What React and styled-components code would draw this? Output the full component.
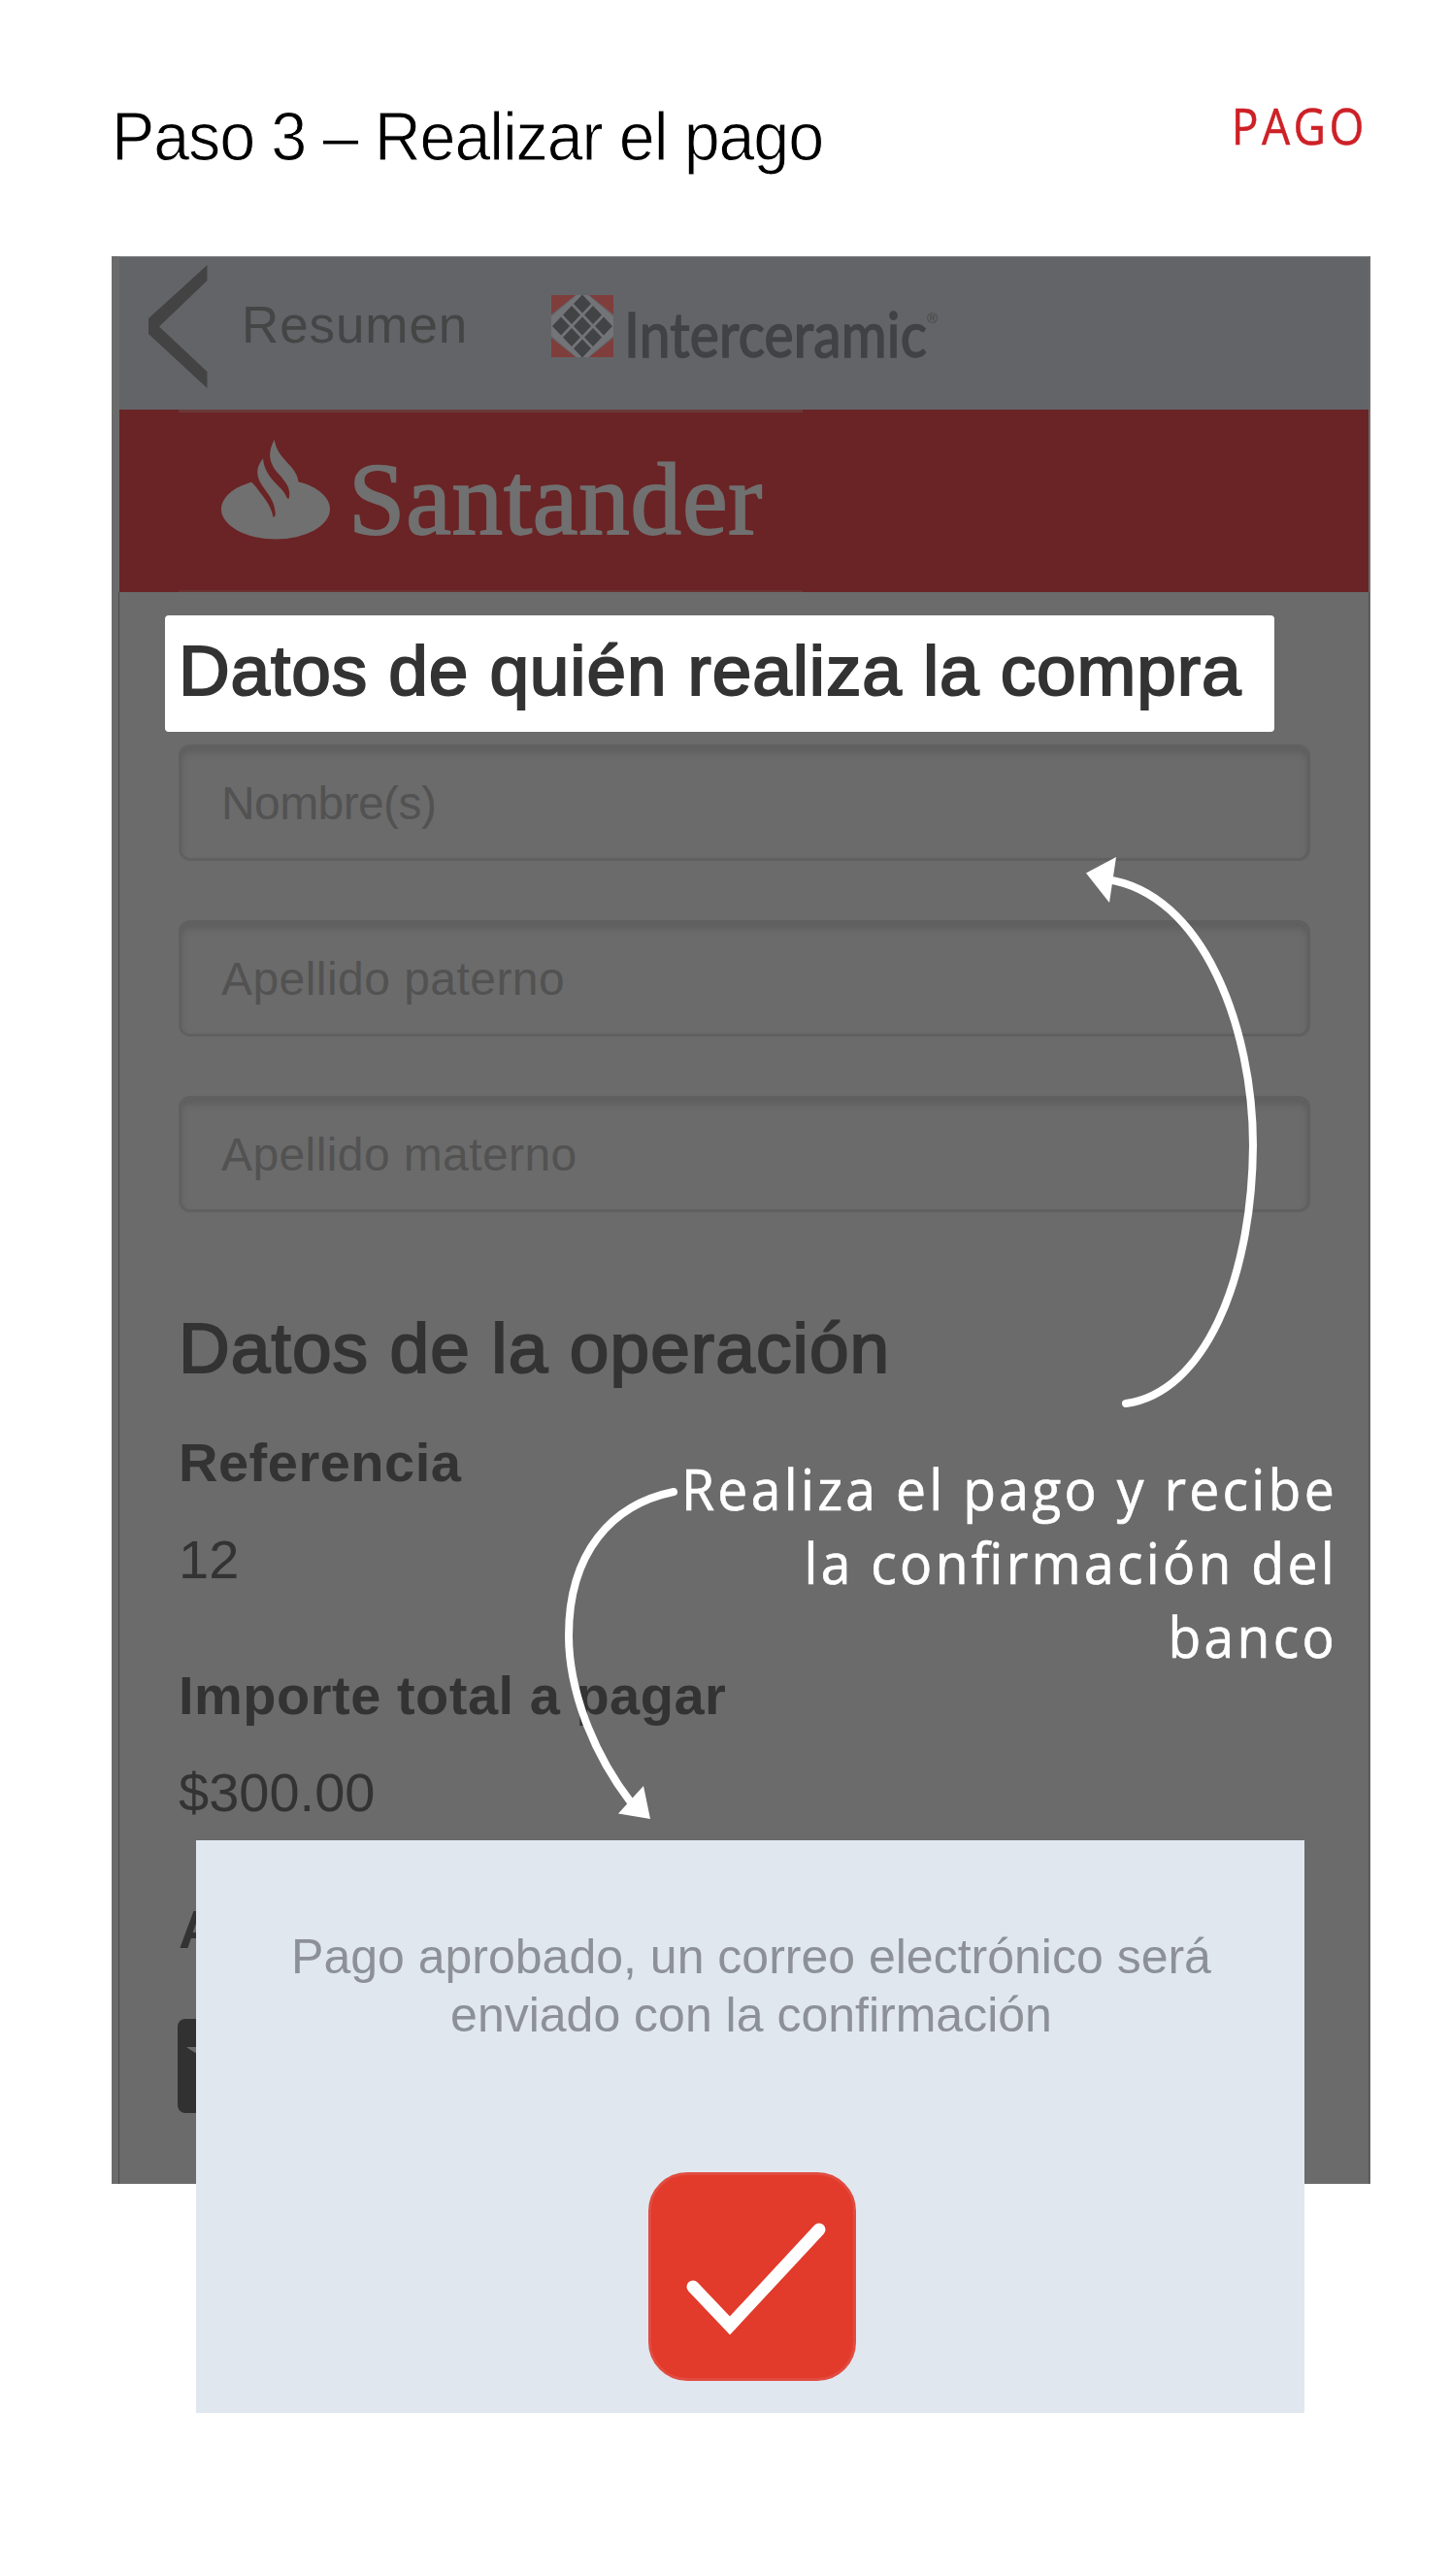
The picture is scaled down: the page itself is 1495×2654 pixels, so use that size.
import React from "react";
import styled, { createGlobalStyle } from "styled-components";

const GlobalStyle = createGlobalStyle`
  *, *::before, *::after { box-sizing: border-box; }
  body { margin: 0; background: #fff; }
`;

const sans = `"Liberation Sans", Arial, sans-serif`;
const humanist = `"Open Sans", "Noto Sans", sans-serif`;

const Page = styled.main`
  width: 1495px;
  height: 2654px;
  padding: 0 83px 0 115px;
  background: #fff;
  font-family: ${sans};
  overflow: hidden;
`;

const PageHeader = styled.header`
  display: flex;
  justify-content: space-between;
  align-items: flex-start;
  height: 264px;
  padding-top: 99px;
`;

const Title = styled.h1`
  margin: 2px 0 0;
  font-size: 70px;
  font-weight: 400;
  line-height: 80px;
  letter-spacing: -1.2px;
  white-space: nowrap;
  color: #000;
  -webkit-text-stroke: 1px #fff;
  transform: scaleX(0.95);
  transform-origin: left;
`;

const Section = styled.span`
  margin-right: 3px;
  font-family: ${humanist};
  font-size: 51px;
  line-height: 60px;
  letter-spacing: 3.8px;
  color: #cd2027;
  -webkit-text-stroke: 0.5px #cd2027;
  transform: scaleX(0.905);
  transform-origin: right;
`;

const Screen = styled.section`
  position: relative;
  width: 1297px;
  height: 1986px;
  padding: 0 2px 0 8px;
  background: #6b6b6b;
`;

const NavBar = styled.nav`
  display: flex;
  align-items: flex-start;
  height: 158px;
  padding-left: 30px;
  background: #636468;
  border-top: 1px solid #77787a;
  color: #454546;
`;

const BackIcon = styled.svg`
  width: 61px;
  height: 127px;
  margin-top: 8px;
`;

const BackLabel = styled.span`
  width: 319px;
  margin: 31px 0 0 35px;
  font-size: 53px;
  line-height: 78px;
  letter-spacing: 0.9px;
`;

const TileIcon = styled.svg`
  width: 64px;
  height: 64px;
  margin-top: 38.5px;
`;

const BrandName = styled.span`
  flex: none;
  width: 309px;
  margin: 39px 0 0 11px;
  font-family: Lato, sans-serif;
  font-size: 64px;
  font-weight: 400;
  line-height: 80px;
  letter-spacing: 0.2px;
  white-space: nowrap;
  color: #414244;
  -webkit-text-stroke: 1.6px #414244;
  transform: scaleX(0.89);
  transform-origin: left;
`;

const Registered = styled.span`
  margin: 53px 0 0 3px;
  font-family: ${sans};
  font-size: 15px;
  line-height: 20px;
`;

const BankBar = styled.div`
  display: flex;
  height: 188px;
  padding-left: 61px;
  background: #6a2425;
`;

const BankBanner = styled.div`
  display: flex;
  align-items: flex-start;
  width: 643px;
  padding: 28px 0 0 44px;
  border-top: 3px solid #6b3838;
  border-bottom: 2px solid #6b3232;
`;

const FlameIcon = styled.svg`
  width: 112px;
  height: 103px;
`;

const BankName = styled.span`
  margin: 2px 0 0 19px;
  font-family: "Liberation Serif", "Times New Roman", serif;
  font-size: 105px;
  line-height: 120px;
  letter-spacing: 0.8px;
  color: #717070;
  -webkit-text-stroke: 1.8px #717070;
`;

const Form = styled.div`
  display: flex;
  flex-direction: column;
  align-items: flex-start;
  height: 1640px;
  padding: 24px 60px 0 61px;
  border-left: 1px solid #4b4b48;
  border-right: 1px solid #545454;
  margin: 0 -1px;
  color: #333;
`;

const Highlight = styled.div`
  width: 1143px;
  height: 120px;
  margin: 0 0 13px -14px;
  padding-left: 14px;
  background: #fff;
  border-radius: 4px;
`;

const Heading = styled.h2`
  margin: ${(p) => p.$top || 0}px 0 0;
  font-size: 73px;
  font-weight: 400;
  line-height: ${(p) => p.$line || 90}px;
  letter-spacing: ${(p) => p.$tracking}px;
  white-space: nowrap;
  color: #333;
  -webkit-text-stroke: 2px #333;
`;

const Fields = styled.div`
  display: flex;
  flex-direction: column;
  gap: 61px;
`;

const Field = styled.input`
  display: block;
  width: 1166px;
  height: 120px;
  padding: 0 41px;
  border: 3px solid #606060;
  border-radius: 12px;
  outline: none;
  background: transparent;
  box-shadow: inset 0 6px 6px #5f5f5f;
  font-family: ${sans};
  font-size: 48px;
  letter-spacing: ${(p) => p.$tracking}px;
  &::placeholder { color: #525252; opacity: 1; }
`;

const Label = styled.div`
  margin-top: ${(p) => p.$top}px;
  font-size: 56px;
  font-weight: 700;
  line-height: 60px;
  letter-spacing: 0.5px;
`;

const Value = styled.div`
  margin-top: 40px;
  font-size: 56px;
  line-height: 60px;
`;

const PayButton = styled.div`
  display: flex;
  align-items: flex-start;
  width: 260px;
  height: 97px;
  margin: 62px 0 0 -1px;
  padding: 29px 0 0 9px;
  border-radius: 8px;
  background: #313131;
`;

const Arrows = styled.svg`
  position: absolute;
  left: 0;
  top: 0;
  width: 1297px;
  height: 1986px;
`;

const Callout = styled.p`
  position: absolute;
  top: 1231px;
  right: 34px;
  width: 760px;
  margin: 0;
  font-family: ${humanist};
  font-size: 59px;
  line-height: 76px;
  letter-spacing: 3.5px;
  font-feature-settings: "liga" 1;
  text-align: right;
  color: #fff;
  -webkit-text-stroke: 0.7px #fff;
  transform: scaleX(0.937);
  transform-origin: right;
`;

const Confirmation = styled.div`
  position: absolute;
  left: 87px;
  top: 1632px;
  display: flex;
  flex-direction: column;
  align-items: center;
  width: 1142px;
  height: 590px;
  padding: 90px 0 0 2px;
  background: #e0e7ef;
`;

const Message = styled.p`
  margin: 0;
  font-size: 50px;
  line-height: 60px;
  text-align: center;
  white-space: nowrap;
  color: #8d9197;
`;

const CheckBadge = styled.div`
  width: 214px;
  height: 215px;
  margin: 132px 0 0 2px;
  border: 3px solid #e14c40;
  border-radius: 40px;
  background: #e23a2b;
`;

const TILE_CENTERS = [
  [32, 9], [21, 20.5], [43, 20.5], [10, 32], [32, 32],
  [54, 32], [21, 43.5], [43, 43.5], [32, 55],
];

function InterceramicTile() {
  return (
    <TileIcon viewBox="0 0 64 64">
      <path d="M26 0H38L64 22V42L38 64H26L0 42V22Z" fill="#737478" />
      <path d="M0 0H25L0 20ZM64 0V20L39 0ZM0 64V44L25 64ZM64 64H39L64 44Z" fill="#7f3e3b" />
      {TILE_CENTERS.map(([x, y]) => (
        <path key={`${x}-${y}`} d={`M${x} ${y - 9.4}L${x + 9} ${y}L${x} ${y + 9.4}L${x - 9} ${y}Z`} fill="#424345" />
      ))}
    </TileIcon>
  );
}

function Flame() {
  return (
    <FlameIcon viewBox="228 453 112 103">
      <ellipse cx="284" cy="524.500" rx="56" ry="31" fill="#717070" />
      <path d="M255 492L264 502C270 511 279 519 281.500 533C287 530 288 520 284 510L276 486Z" fill="#6a2425" />
      <path d="M272 488L293 512L297.500 514C303 507 298 500 291 493L279 484Z" fill="#6a2425" />
      <path d="M271 472.500C263 482 264 491 270 500C276 509 285 518 283.500 533L296 524C298 517 296 510 288 502C281 495 272 486 271 472.500Z" fill="#717070" />
      <path d="M282.700 453C275 467 278 477 285 486C292 494 301 502 297.500 514L311 512L307.500 499C308 480 286 475 282.700 453Z" fill="#717070" />
    </FlameIcon>
  );
}

export default function App() {
  return (
    <>
      <GlobalStyle />
      <Page>
        <PageHeader>
          <Title>Paso 3 – Realizar el pago</Title>
          <Section>PAGO</Section>
        </PageHeader>
        <Screen>
          <NavBar>
            <BackIcon viewBox="0 0 61 127">
              <path d="M60.500 0V16L11 63.500L60.500 110V127L0 71V55L31 27Z" fill="#434343" />
            </BackIcon>
            <BackLabel>Resumen</BackLabel>
            <InterceramicTile />
            <BrandName>Interceramic</BrandName>
            <Registered>®</Registered>
          </NavBar>
          <BankBar>
            <BankBanner>
              <Flame />
              <BankName>Santander</BankName>
            </BankBanner>
          </BankBar>
          <Form>
            <Highlight>
              <Heading $line={113} $tracking={0.88}>Datos de quién realiza la compra</Heading>
            </Highlight>
            <Fields>
              <Field $tracking={-0.6} placeholder="Nombre(s)" />
              <Field $tracking={0.45} placeholder="Apellido paterno" />
              <Field $tracking={0.4} placeholder="Apellido materno" />
            </Fields>
            <Heading $top={95} $tracking={1.1}>Datos de la operación</Heading>
            <Label $top={43}>Referencia</Label>
            <Value>12</Value>
            <Label $top={80}>Importe total a pagar</Label>
            <Value>$300.00</Value>
            <Label $top={81}>A</Label>
            <PayButton>
              <svg width="20" height="12" viewBox="0 0 20 12">
                <path d="M0 0H20V12L6 4Z" fill="#6b6b6b" />
              </svg>
            </PayButton>
          </Form>
          <Arrows viewBox="115 264 1297 1986">
            <g fill="none" stroke="#fff" strokeWidth="8" strokeLinecap="round">
              <path d="M1160 1446C1240 1435 1290 1320 1291 1180C1291 1060 1240 920 1140 906" />
              <path d="M694 1537C630 1550 586 1600 586 1685C586 1740 610 1805 650 1857" />
            </g>
            <path d="M1119 899.500L1150 883L1143 930ZM670 1874L663 1840L637 1868.500Z" fill="#fff" />
          </Arrows>
          <Callout>
            Realiza el pago y recibe
            <br />
            la confirmación del
            <br />
            banco
          </Callout>
          <Confirmation>
            <Message>
              Pago aprobado, un correo electrónico será
              <br />
              enviado con la confirmación
            </Message>
            <CheckBadge>
              <svg width="208" height="209" viewBox="671 2241 208 209">
                <path d="M714 2356L752 2396L844 2297" fill="none" stroke="#fff" strokeWidth="13" strokeLinecap="round" />
              </svg>
            </CheckBadge>
          </Confirmation>
        </Screen>
      </Page>
    </>
  );
}
